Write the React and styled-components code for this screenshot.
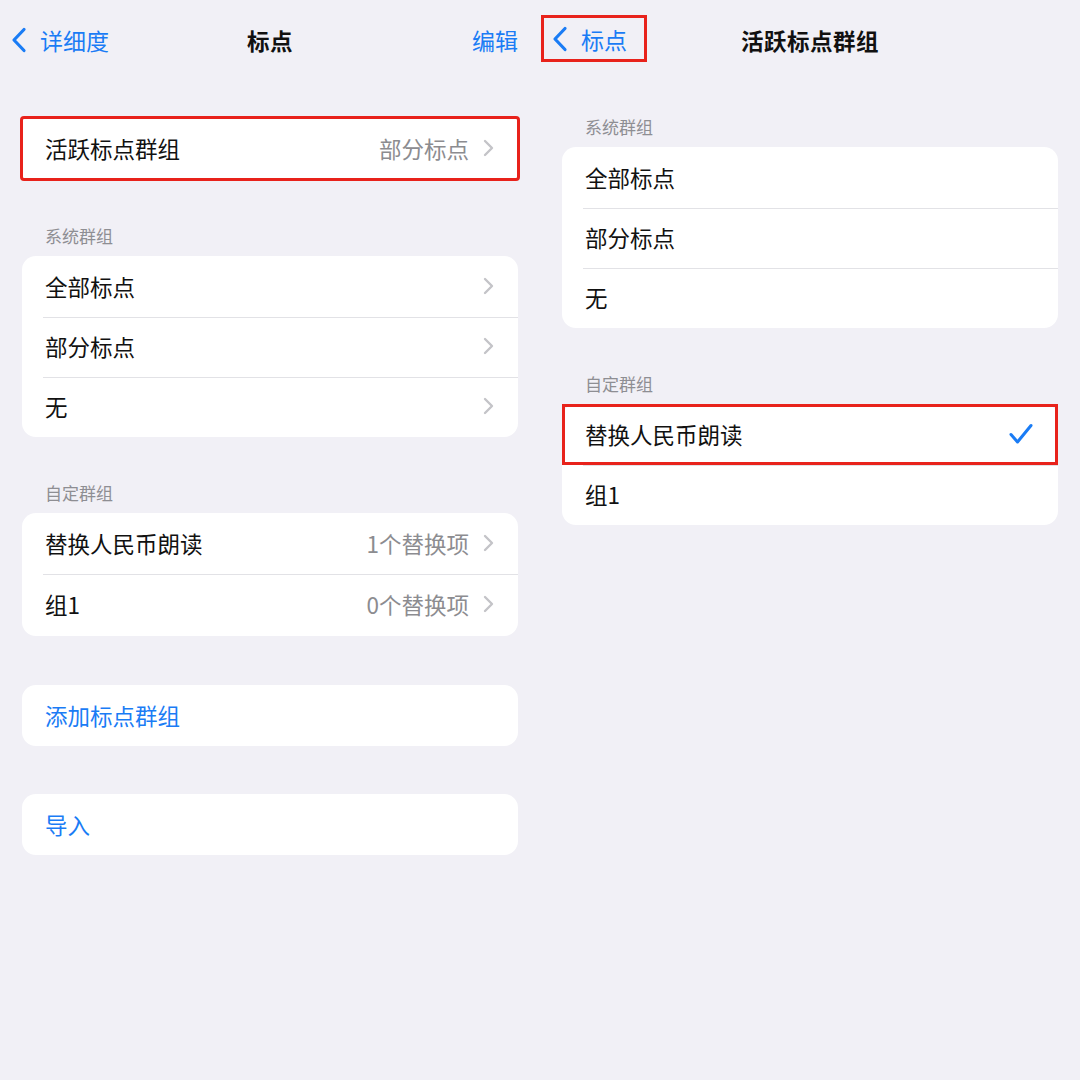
import styled, { createGlobalStyle } from "styled-components";

const colors = {
  background: "#f1f0f6",
  card: "#ffffff",
  text: "#111111",
  secondary: "#8c8c90",
  header: "#8e8e93",
  chevron: "#c4c4c8",
  separator: "#e2e2e6",
  blue: "#1a7cf5",
  mark: "#e8221b",
};

const GlobalStyle = createGlobalStyle`
  html, body {
    margin: 0;
    padding: 0;
    background: ${colors.background};
  }
  body {
    font-family: "Noto Sans CJK SC", "Noto Sans", "Liberation Sans", sans-serif;
    color: ${colors.text};
  }
`;

function BackChevron() {
  return (
    <svg width="16" height="26" viewBox="0 0 16 26">
      <polyline
        points="13,2.5 3,13 13,23.5"
        fill="none"
        stroke={colors.blue}
        strokeWidth="3.2"
        strokeLinecap="round"
        strokeLinejoin="round"
      />
    </svg>
  );
}

function RowChevron() {
  return (
    <svg width="11" height="18" viewBox="0 0 11 18">
      <polyline
        points="2,2 9,9 2,16"
        fill="none"
        stroke={colors.chevron}
        strokeWidth="2.4"
        strokeLinecap="round"
        strokeLinejoin="round"
      />
    </svg>
  );
}

function Check() {
  return (
    <svg width="26" height="22" viewBox="0 0 26 22">
      <polyline
        points="3,11.5 9.5,19 23,2.5"
        fill="none"
        stroke={colors.blue}
        strokeWidth="3"
        strokeLinecap="round"
        strokeLinejoin="round"
      />
    </svg>
  );
}

function Row({ label, value, chevron, checked, highlighted, action, tall }) {
  return (
    <StyledRow $highlighted={highlighted} $tall={tall}>
      <RowLabel $action={action}>{label}</RowLabel>
      <RowTrail>
        {value && <RowValue>{value}</RowValue>}
        {chevron && <RowChevron />}
        {checked && <Check />}
      </RowTrail>
    </StyledRow>
  );
}

function App() {
  return (
    <>
      <GlobalStyle />
      <Screen>
        <Panel>
          <NavBar>
            <BackButton>
              <BackChevron />
              <span>详细度</span>
            </BackButton>
            <NavTitle>标点</NavTitle>
            <NavAction>编辑</NavAction>
          </NavBar>

          <Section $first>
            <Card $highlighted>
              <Row label="活跃标点群组" value="部分标点" chevron />
            </Card>
          </Section>

          <Section $gap={45}>
            <SectionHeader>系统群组</SectionHeader>
            <Card>
              <Row label="全部标点" chevron />
              <Row label="部分标点" chevron />
              <Row label="无" chevron />
            </Card>
          </Section>

          <Section>
            <SectionHeader>自定群组</SectionHeader>
            <Card>
              <Row label="替换人民币朗读" value="1个替换项" chevron />
              <Row label="组1" value="0个替换项" chevron tall />
            </Card>
          </Section>

          <Section $gap={49}>
            <Card>
              <Row label="添加标点群组" action />
            </Card>
          </Section>

          <Section $gap={48}>
            <Card>
              <Row label="导入" action />
            </Card>
          </Section>
        </Panel>

        <Panel>
          <NavBar>
            <BackButton $highlighted>
              <BackChevron />
              <span>标点</span>
            </BackButton>
            <NavTitle>活跃标点群组</NavTitle>
            <span />
          </NavBar>

          <Section $gap={35}>
            <SectionHeader>系统群组</SectionHeader>
            <Card>
              <Row label="全部标点" />
              <Row label="部分标点" />
              <Row label="无" />
            </Card>
          </Section>

          <Section>
            <SectionHeader>自定群组</SectionHeader>
            <Card>
              <Row label="替换人民币朗读" checked highlighted />
              <Row label="组1" />
            </Card>
          </Section>
        </Panel>
      </Screen>
    </>
  );
}
export default App;

const Screen = styled.div`
  display: grid;
  grid-template-columns: 540px 540px;
  width: 1080px;
  height: 1080px;
  background: ${colors.background};
  overflow: hidden;
`;

const Panel = styled.div`
  display: flex;
  flex-direction: column;
  padding: 0 22px;
`;

const NavBar = styled.div`
  display: grid;
  grid-template-columns: 1fr auto 1fr;
  align-items: center;
  height: 80px;
  margin: 0 -22px;
  padding: 0 22px;
`;

const BackButton = styled.div`
  justify-self: start;
  display: flex;
  align-items: center;
  gap: 13px;
  height: 47px;
  padding: 0 20px 0 11px;
  box-sizing: border-box;
  margin-left: ${(p) => (p.$highlighted ? "-21px" : "-22px")};
  margin-top: ${(p) => (p.$highlighted ? "-3px" : "0")};
  color: ${colors.blue};
  font-size: 23px;
  box-shadow: ${(p) => (p.$highlighted ? `inset 0 0 0 3px ${colors.mark}` : "none")};
`;

const NavTitle = styled.div`
  font-size: 22.5px;
  font-weight: 700;
  letter-spacing: 0.5px;
`;

const NavAction = styled.div`
  justify-self: end;
  color: ${colors.blue};
  font-size: 23px;
`;

const Section = styled.div`
  display: flex;
  flex-direction: column;
  margin-top: ${(p) => (p.$first ? 38 : p.$gap ?? 44)}px;
`;

const SectionHeader = styled.div`
  height: 24px;
  line-height: 24px;
  margin-bottom: 8px;
  padding-left: 23px;
  font-size: 17px;
  color: ${colors.header};
`;

const Card = styled.div`
  background: ${colors.card};
  border-radius: ${(p) => (p.$highlighted ? "2px" : "14px")};
  outline: ${(p) => (p.$highlighted ? `3px solid ${colors.mark}` : "none")};
  outline-offset: -1px;
`;

const StyledRow = styled.div`
  position: relative;
  display: flex;
  align-items: center;
  justify-content: space-between;
  height: 61px;
  padding: 0 24px 2px 23px;
  box-sizing: border-box;
  box-shadow: ${(p) => (p.$highlighted ? `inset 0 0 0 3px ${colors.mark}` : "none")};

  &:not(:first-child) {
    height: ${(p) => (p.$tall ? 62 : 60)}px;
  }
  &:not(:first-child)::before {
    content: "";
    position: absolute;
    top: 0;
    left: 21px;
    right: 0;
    height: 1px;
    background: ${colors.separator};
  }
`;

const RowLabel = styled.div`
  font-size: 22.5px;
  color: ${(p) => (p.$action ? colors.blue : colors.text)};
`;

const RowTrail = styled.div`
  display: flex;
  align-items: center;
  gap: 14px;
`;

const RowValue = styled.div`
  font-size: 22.5px;
  color: ${colors.secondary};
`;
